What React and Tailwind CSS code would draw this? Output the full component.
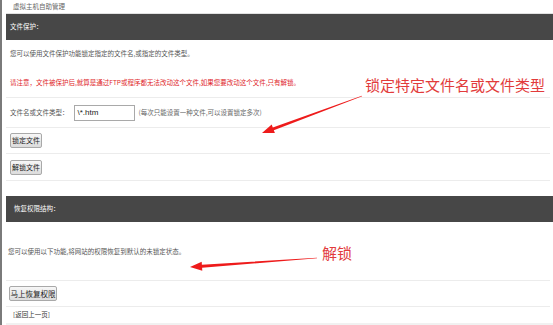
import React from "react";

const font = { fontFamily: '"Noto Sans CJK SC", "Noto Sans", sans-serif' };

const Btn = ({ children, className = "" }) => (
  <button
    className={`flex items-center justify-center whitespace-nowrap border border-[#a9a9a9] rounded-[2px] bg-gradient-to-b from-[#f7f7f7] to-[#dcdcdc] text-[#222] leading-none ${className}`}
  >
    {children}
  </button>
);

const Line = () => <div className="h-px bg-[#ececec] mr-[3px]" />;

export default function App() {
  return (
    <div className="relative w-[553px] h-[325px] bg-white overflow-hidden text-[6.5px] text-[#555] whitespace-nowrap" style={font}>
      <div className="flex h-full">
        {/* left frame */}
        <div className="w-[2px] bg-[#7a7a7a] shrink-0" />
        <div className="w-[4px] shrink-0" />

        <div className="flex-1 flex flex-col">
          {/* title */}
          <div className="h-[14px] flex items-start pt-[2px] pl-[7px] border-b border-[#e2e2e2] text-[#666]">
            虚拟主机自助管理
          </div>

          {/* section 1 */}
          <div className="h-[26px] bg-[#474747] flex items-center pl-[4px] text-white">文件保护：</div>
          <div className="h-[26px] flex items-center pl-[4px] pt-[1px]">
            您可以使用文件保护功能锁定指定的文件名,或指定的文件类型。
          </div>
          <div className="h-[31px] flex items-center pl-[4px] pt-[3px] text-[#e0262a]">
            请注意，文件被保护后,就算是通过FTP或程序都无法改动这个文件,如果您要改动这个文件,只有解锁。
          </div>
          <Line />
          <div className="h-[29px] flex items-center pl-[4px]">
            <span>文件名或文件类型：</span>
            <div className="ml-[5px] w-[61px] h-[16px] border border-[#a9a9a9] flex items-center pl-[3px] text-[8px] text-[#222]" style={{ fontFamily: '"Liberation Sans", sans-serif' }}>
              \*.htm
            </div>
            <span className="ml-[4px] text-[#666]">(每次只能设置一种文件,可以设置锁定多次)</span>
          </div>
          <Line />
          <div className="h-[25px] flex items-center pl-[4px]">
            <Btn className="w-[32px] h-[15px] text-[7px]">锁定文件</Btn>
          </div>
          <Line />
          <div className="h-[26px] flex items-center pl-[4px]">
            <Btn className="w-[32px] h-[15px] text-[7px]">解锁文件</Btn>
          </div>
          <Line />
          <div className="h-[15px]" />

          {/* section 2 */}
          <div className="h-[26px] bg-[#474747] flex items-center pl-[8px] text-white">恢复权限结构：</div>
          <div className="h-[58px] flex items-center pl-[2px] pt-[2px]">
            您可以使用以下功能,将网站的权限恢复到默认的未锁定状态。
          </div>
          <Line />
          <div className="h-[25px] flex items-center pl-[3px]">
            <Btn className="w-[48px] h-[15px] text-[7.5px]">马上恢复权限</Btn>
          </div>
          <Line />
          <div className="h-[16px] flex items-center pl-[7px] text-[#333]">[返回上一页]</div>
          <div className="flex-1 bg-[#f1f1f1]" />
        </div>
      </div>

      {/* annotations */}
      <div className="absolute left-[364px] top-[75px] bg-white px-[1px] text-[15px] leading-[20px] text-[#e23b3b]">
        锁定特定文件名或文件类型
      </div>
      <div className="absolute left-[321px] top-[243px] bg-white px-[1px] text-[15px] leading-[20px] text-[#e23b3b]">
        解锁
      </div>
      <svg className="absolute left-0 top-0 pointer-events-none" width="553" height="325">
        <polygon
          fill="#ee1b1b"
          points="361.9,95.7 272.8,127.4 271.7,124.6 262,133 274.9,133 273.8,130.2 362.1,96.3"
        />
        <polygon
          fill="#ee1b1b"
          points="316.98,257.7 201.9,264.7 201.7,261.7 190,267 202.3,270.7 202.1,267.7 317.02,258.3"
        />
      </svg>
    </div>
  );
}
